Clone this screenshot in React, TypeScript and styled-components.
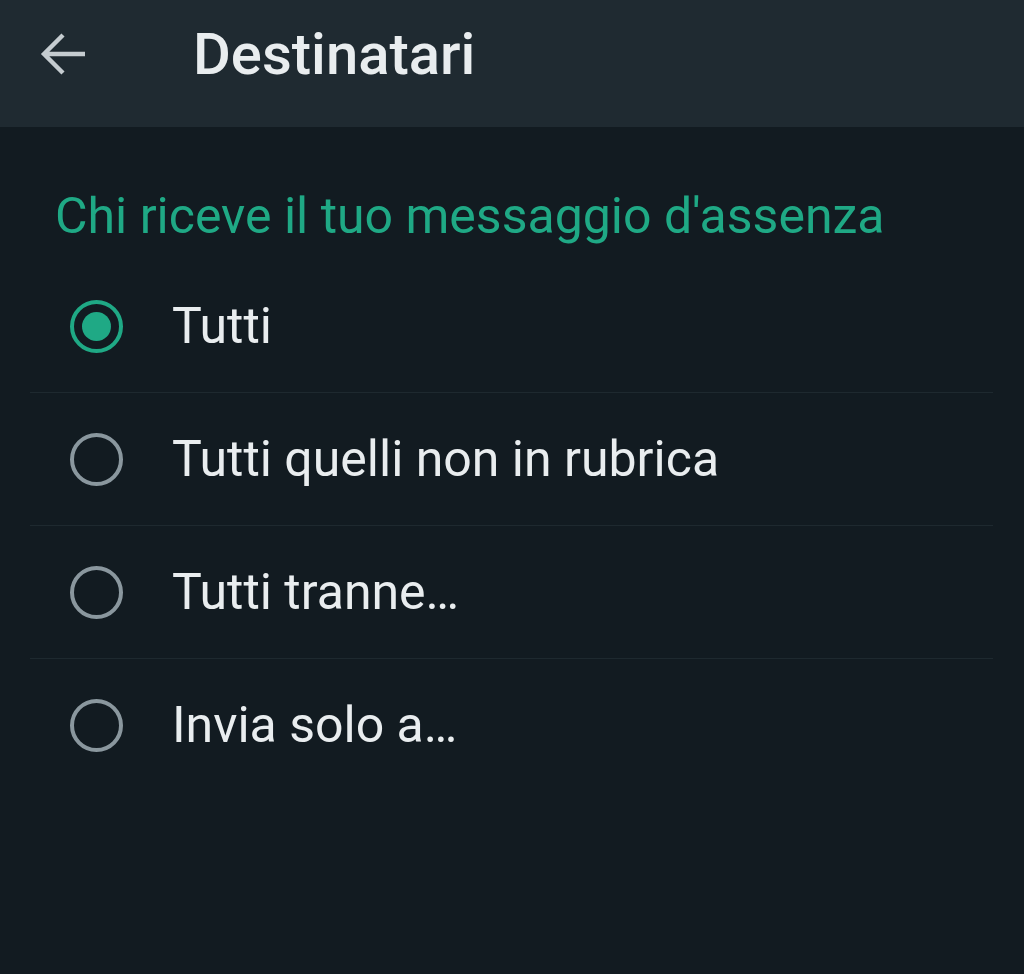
import React, { useState } from 'react'
import styled, { createGlobalStyle } from 'styled-components'

const GlobalStyle = createGlobalStyle`
  html, body {
    margin: 0;
    padding: 0;
    background: #121b21;
  }
  body {
    font-family: Roboto, "Noto Sans", "Liberation Sans", sans-serif;
    -webkit-font-smoothing: antialiased;
  }
`

const options = [
  'Tutti',
  'Tutti quelli non in rubrica',
  'Tutti tranne…',
  'Invia solo a…',
]

const App = () => {
  const [selected, setSelected] = useState(0)

  return (
    <Screen>
      <GlobalStyle />
      <Toolbar>
        <BackButton aria-label="Indietro">
          <svg width="46" height="44" viewBox="0 0 46 44" fill="none">
            <path
              d="M45 22H4M23 3L4 22l19 19"
              stroke="#c5ccd0"
              strokeWidth="4.4"
              strokeLinecap="butt"
              strokeLinejoin="miter"
            />
          </svg>
        </BackButton>
        <Title>Destinatari</Title>
      </Toolbar>

      <Content>
        <SectionTitle>Chi riceve il tuo messaggio d'assenza</SectionTitle>
        <List>
          {options.map((label, index) => (
            <Row key={label} onClick={() => setSelected(index)} last={index === options.length - 1}>
              <Radio checked={selected === index} />
              <Label>{label}</Label>
            </Row>
          ))}
        </List>
      </Content>
    </Screen>
  )
}

const Screen = styled.div`
  width: 1024px;
  min-height: 974px;
  background: #121b21;
`

const Toolbar = styled.header`
  height: 127px;
  box-sizing: border-box;
  padding: 0 0 19px 40px;
  background: #1f2a31;
  display: flex;
  align-items: center;
`

const BackButton = styled.button`
  width: 52px;
  height: 48px;
  padding: 0;
  border: 0;
  background: none;
  display: flex;
  align-items: center;
  cursor: pointer;
`

const Title = styled.h1`
  margin: 0 0 0 101px;
  font-family: Roboto, "Noto Sans", sans-serif;
  font-weight: 500;
  font-size: 58px;
  line-height: 64px;
  color: #e9edef;
`

const Content = styled.main`
  padding-top: 57px;
`

const SectionTitle = styled.h2`
  margin: 0 0 0 55px;
  height: 76px;
  font-family: Roboto, "Noto Sans", sans-serif;
  font-weight: 400;
  font-size: 50px;
  line-height: 64px;
  color: #1fa985;
`

const List = styled.div`
  display: flex;
  flex-direction: column;
`

const Row = styled.div<{ last?: boolean }>`
  height: 132px;
  margin: 0 31px 0 30px;
  padding-left: 40px;
  display: flex;
  align-items: center;
  border-bottom: 1px solid ${(p) => (p.last ? 'transparent' : '#1e292f')};
  cursor: pointer;
`

const Radio = styled.span<{ checked?: boolean }>`
  position: relative;
  width: 53px;
  height: 53px;
  box-sizing: border-box;
  border-radius: 50%;
  border: 4.5px solid ${(p) => (p.checked ? '#1fa985' : '#8a979e')};
  flex-shrink: 0;

  &::after {
    content: '';
    position: absolute;
    inset: 8px;
    border-radius: 50%;
    background: #1fa985;
    display: ${(p) => (p.checked ? 'block' : 'none')};
  }
`

const Label = styled.span`
  margin-left: 49px;
  font-family: Roboto, "Noto Sans", sans-serif;
  font-size: 50px;
  line-height: 60px;
  color: #e9edef;
`

export default App
